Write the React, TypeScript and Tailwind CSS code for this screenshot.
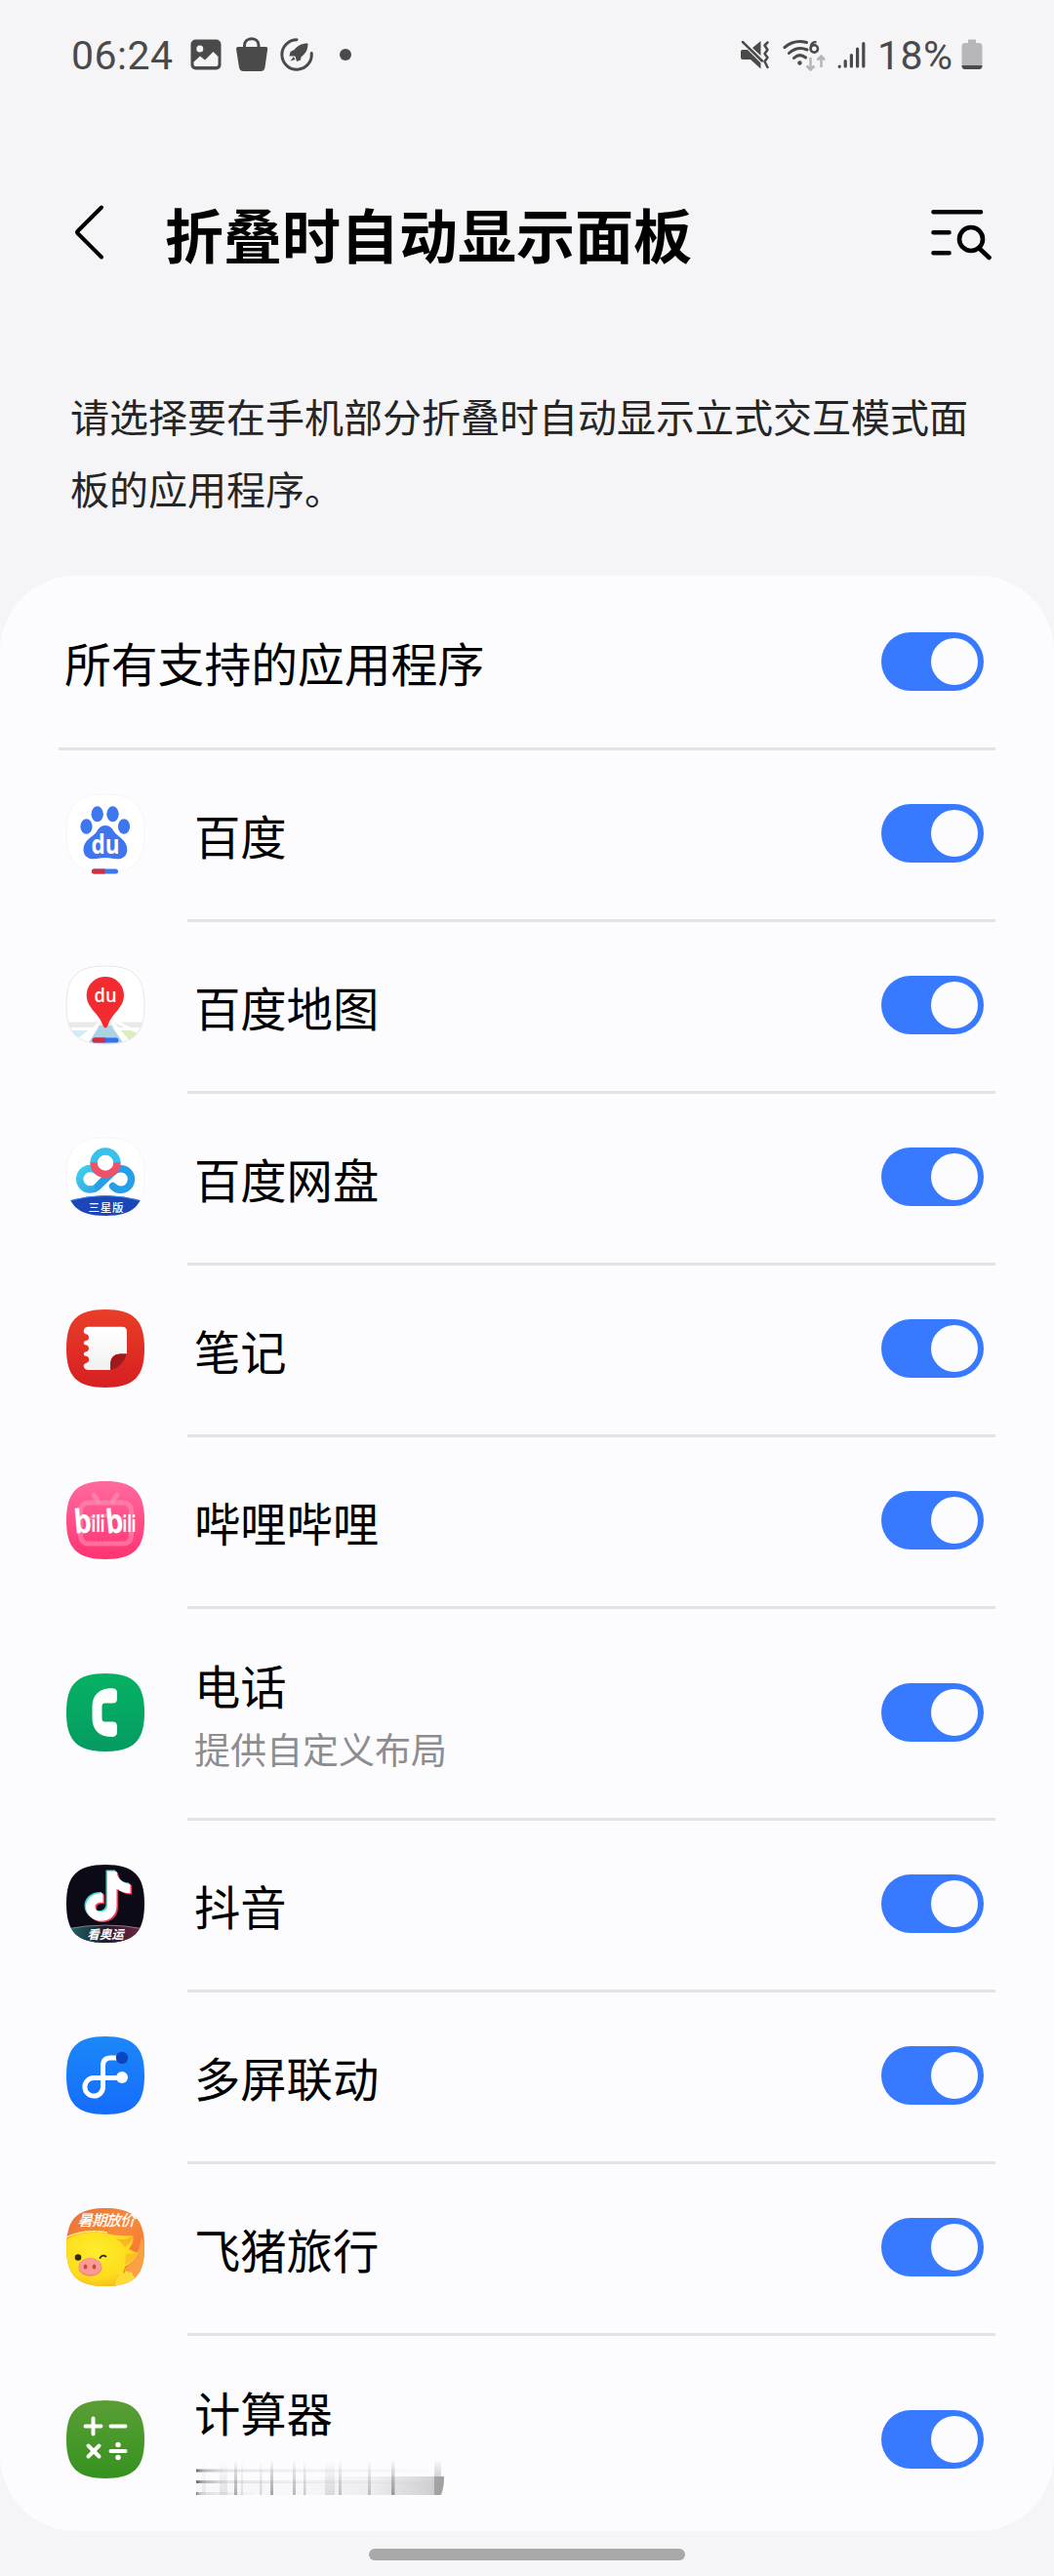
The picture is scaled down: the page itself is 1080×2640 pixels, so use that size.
import type { ReactNode } from "react";

const SQUIRCLE = "M40 0C69 0 80 11 80 40S69 80 40 80 0 69 0 40 11 0 40 0Z";

function AppIcon({ id, children }: { id: string; children: ReactNode }) {
  return (
    <svg viewBox="0 0 80 80" className="size-20 shrink-0 overflow-visible">
      <defs>
        <clipPath id={`${id}-clip`}>
          <path d={SQUIRCLE} />
        </clipPath>
      </defs>
      {children}
    </svg>
  );
}

function BaiduIcon() {
  return (
    <AppIcon id="baidu">
      <path d={SQUIRCLE} fill="#fff" stroke="#f6f6f9" />
      <g fill="#3d76ee">
        <ellipse cx="20.5" cy="33" rx="6.1" ry="7.8" />
        <ellipse cx="31.7" cy="20.3" rx="6.2" ry="8" />
        <ellipse cx="47.5" cy="20.3" rx="6.2" ry="8" />
        <ellipse cx="59" cy="33" rx="6.1" ry="7.8" />
        <path d="M40 32C35 32 33 35 31 38.500C27 44 17.500 47 17.500 56.500C17.500 63 22 66.500 28 66.300C33 66 36 65 40 65S47 66 52 66.300C58 66.500 62.300 63 62.300 56.500C62.300 47 53 44 49 38.500C47 35 45 32 40 32Z" />
      </g>
      <text x="40" y="61" textAnchor="middle" fontSize="26" fontWeight="700" textLength="29" lengthAdjust="spacingAndGlyphs" fill="#fff" fontFamily="Open Sans, sans-serif">du</text>
      <rect x="26" y="76.500" width="27" height="5" rx="2.500" fill="#3d76ee" />
      <path d="M39.500 76.500H28.500a2.500 2.500 0 0 0 0 5H39.500Z" fill="#d32f3f" />
    </AppIcon>
  );
}

function MapIcon() {
  return (
    <AppIcon id="map">
      <g clipPath="url(#map-clip)">
        <rect width="80" height="80" fill="#fff" />
        <path d="M0 57.500H80V63H0Z" fill="#e9e9ea" />
        <path d="M0 66H22L10 76H0Z" fill="#d3ebf4" />
        <path d="M34 61H46L59 80H22Z" fill="#abd3e6" />
        <path d="M53 66H80V80H66Z" fill="#dcecc0" />
        <path d="M34 58 12 80M47 58 66 80M48 56 78 70" stroke="#fff" strokeWidth="3" />
      </g>
      <path d={SQUIRCLE} fill="none" stroke="#e7e7ea" />
      <path d="M40 11C29 11 20.700 19.500 20.700 30C20.700 43 34 49 37.500 61Q40 66 42.500 61C46 49 59 43 59 30C59 19.500 51 11 40 11Z" fill="#f32b30" />
      <text x="40" y="37" textAnchor="middle" fontSize="20" fontWeight="600" textLength="23" lengthAdjust="spacingAndGlyphs" fill="#fff" fontFamily="Open Sans, sans-serif">du</text>
      <rect x="26.500" y="73.500" width="27" height="5" rx="2.500" fill="#3472ec" />
      <path d="M40 73.500H29a2.500 2.500 0 0 0 0 5H40Z" fill="#d92b3c" />
    </AppIcon>
  );
}

function NetdiskIcon() {
  return (
    <AppIcon id="disk">
      <defs>
        <linearGradient id="disk-l" x1="0" y1="0" x2="1" y2="1">
          <stop stopColor="#3fd0e8" />
          <stop offset="1" stopColor="#2f9fe8" />
        </linearGradient>
      </defs>
      <path d={SQUIRCLE} fill="#fff" stroke="#f6f6f9" />
      <g fill="none" strokeWidth="7.400" strokeLinecap="round">
        <path d="M38 43.500 32.500 49.500A10.800 10.800 0 1 1 32 34.500" stroke="url(#disk-l)" />
        <path d="M32.500 49.500 47.500 35.500A10.800 10.800 0 1 1 47.500 49.500" stroke="#259fe8" />
        <path d="M28 26A12 12 0 0 1 52 26" stroke="#38c1ea" strokeLinecap="butt" />
        <path d="M28 25.500A12 12 0 0 0 52 25.500" stroke="#ef5168" strokeLinecap="butt" />
      </g>
      <g clipPath="url(#disk-clip)">
        <path d="M2 65Q40 54 78 65V82H2Z" fill="#1c46b7" />
        <path d="M2 65Q40 54 78 65" fill="none" stroke="#3784df" />
      </g>
      <text x="40.500" y="76" textAnchor="middle" fontSize="11.500" fontWeight="500" textLength="36" fill="#fff" fontFamily="Noto Sans CJK SC, sans-serif">三星版</text>
    </AppIcon>
  );
}

function NotesIcon() {
  return (
    <AppIcon id="notes">
      <defs>
        <linearGradient id="notes-bg" x2="0" y2="1">
          <stop stopColor="#e93e27" />
          <stop offset="1" stopColor="#d61f22" />
        </linearGradient>
        <linearGradient id="notes-page" x2="0" y2="1">
          <stop stopColor="#fff" />
          <stop offset="1" stopColor="#f1f1f2" />
        </linearGradient>
      </defs>
      <path d={SQUIRCLE} fill="url(#notes-bg)" />
      <path
        d="M22 17.700H57Q62 17.700 62 22.700V45.500H55Q45.500 46 45.200 55V62H22Q17.500 61.500 17.700 57Q18.500 55 21.300 54.500A3 3.500 0 0 0 21.300 48Q18 48 17.700 45.500Q18 43.500 21.300 43A3 3.500 0 0 0 21.300 36.700Q18 36.500 17.700 34.300Q18 32 21.300 31.800A3 3.500 0 0 0 21.300 25.500Q18 25 17.700 22.500Q18 18 22 17.700Z"
        fill="url(#notes-page)"
      />
      <path d="M45.200 62V55Q45.500 46 55 45.500H62Q60 52 55.500 56.500T45.200 62Z" fill="#9f1a1c" />
    </AppIcon>
  );
}

function BilibiliIcon() {
  return (
    <AppIcon id="bili">
      <defs>
        <linearGradient id="bili-bg" x2="0" y2="1">
          <stop stopColor="#ff6a9f" />
          <stop offset="1" stopColor="#ff3371" />
        </linearGradient>
      </defs>
      <path d={SQUIRCLE} fill="url(#bili-bg)" />
      <g fill="none" stroke="#ff8fb4" strokeOpacity=".6" strokeWidth="5" strokeLinecap="round">
        <rect x="14.500" y="22" width="52" height="42" rx="8" />
        <path d="M28 14 33 21M52 14 47 21" />
        <path d="M24 38Q40 32 56 38" strokeWidth="4" />
      </g>
      <g fill="#fff" fontFamily="Open Sans, sans-serif" fontWeight="700">
        <text x="7.500" y="53" fontSize="34" textLength="18" lengthAdjust="spacingAndGlyphs" transform="rotate(-5 16 40)">b</text>
        <text x="25.500" y="52" fontSize="24" textLength="14" lengthAdjust="spacingAndGlyphs">ili</text>
        <text x="40" y="53" fontSize="34" textLength="18" lengthAdjust="spacingAndGlyphs" transform="rotate(-5 48 40)">b</text>
        <text x="57.500" y="52" fontSize="24" textLength="14" lengthAdjust="spacingAndGlyphs">ili</text>
      </g>
    </AppIcon>
  );
}

function PhoneIcon() {
  return (
    <AppIcon id="phone">
      <defs>
        <linearGradient id="phone-bg" x2="0" y2="1">
          <stop stopColor="#06b262" />
          <stop offset="1" stopColor="#059b62" />
        </linearGradient>
      </defs>
      <path d={SQUIRCLE} fill="url(#phone-bg)" />
      <path
        d="M46 15.200C34 15.200 26.500 22 26.500 34V46C26.500 58 34 65 46 65C50 65 52 63.500 52 60V54.500Q52 49.500 47.500 49.500H39.500Q36.500 49.500 36.500 46.500V33.500Q36.500 30.500 39.500 30.500H47.500Q52 30.500 52 26V20C52 16.500 50 15.200 46 15.200Z"
        fill="#fff"
      />
    </AppIcon>
  );
}

const NOTE = "M41 6H50.500C51 14 57 18.500 64.500 19V28.500C59 28.500 54 26.500 50.500 24V42C50.500 51 43 57 34.500 57S19 50.500 19 42.500 26 28 36.500 28.500V38C31 37.500 28.500 39.500 28.500 42.500S31 47.500 34.500 47.500 41 45 41 41Z";

function DouyinIcon() {
  return (
    <AppIcon id="douyin">
      <defs>
        <linearGradient id="douyin-band">
          <stop stopColor="#1b6d6c" />
          <stop offset=".5" stopColor="#231c2c" />
          <stop offset="1" stopColor="#7d2349" />
        </linearGradient>
      </defs>
      <g clipPath="url(#douyin-clip)">
        <rect width="80" height="80" fill="#0b0a16" />
        <path d="M0 66Q40 58 80 66V80H0Z" fill="url(#douyin-band)" />
        <path d="M0 66Q40 58 80 66" fill="none" stroke="#9b93a0" strokeWidth=".8" />
      </g>
      <path d={NOTE} fill="#42dccf" transform="translate(-.5 -.5)" />
      <path d={NOTE} fill="#f0385f" transform="translate(2.500 2)" />
      <path d={NOTE} fill="#fff" transform="translate(1 .8)" />
      <text x="40" y="76" textAnchor="middle" fontSize="12.500" fontStyle="italic" fontWeight="700" fill="#fff" fontFamily="Noto Sans CJK SC, sans-serif">看奥运</text>
    </AppIcon>
  );
}

function FlowIcon() {
  return (
    <AppIcon id="flow">
      <defs>
        <linearGradient id="flow-bg" x2="0" y2="1">
          <stop stopColor="#1b88f8" />
          <stop offset="1" stopColor="#156cfb" />
        </linearGradient>
      </defs>
      <path d={SQUIRCLE} fill="url(#flow-bg)" />
      <path d="M56 42.500H28A9.300 9.300 0 1 0 37.500 51.500V30Q37.500 22 45.500 22H52" fill="none" stroke="#fff" strokeWidth="5" />
      <circle cx="57" cy="42" r="6" fill="#fff" />
      <circle cx="57" cy="22" r="6.200" fill="#0a46bf" />
    </AppIcon>
  );
}

function FliggyIcon() {
  return (
    <AppIcon id="pig">
      <defs>
        <linearGradient id="pig-bg" x2="1" y2="1">
          <stop stopColor="#e9713b" />
          <stop offset=".5" stopColor="#f98a3a" />
          <stop offset="1" stopColor="#f0682a" />
        </linearGradient>
        <radialGradient id="pig-face" cx=".4" cy=".35" r=".75">
          <stop stopColor="#ffec2c" />
          <stop offset=".65" stopColor="#fddd1c" />
          <stop offset="1" stopColor="#f5b515" />
        </radialGradient>
      </defs>
      <g clipPath="url(#pig-clip)">
        <rect width="80" height="80" fill="url(#pig-bg)" />
        <path d="M60 62Q74 50 77 30L82 40V80H60Z" fill="#f9a043" />
        <path d="M0 32Q16 22 42 26Q52 29 68 28Q70 34 64 42Q70 45 74 46Q68 56 60 60Q58 72 52 80H0Z" fill="url(#pig-face)" />
        <path d="M50 31Q62 34 68 28Q68 35 60 40Q56 34 50 31Z" fill="#f9a72b" fillOpacity=".75" />
        <path d="M61 47Q68 47 73 46Q68 54 60 58Z" fill="#fbb22b" fillOpacity=".7" />
        <path d="M0 30Q18 21 42 25" stroke="#fff06b" strokeWidth="1.500" fill="none" />
        <path d="M50 80Q50 72 55 69Q50 65 53 63Q57 64 59 67Q61 62 64 66Q68 64 68 69Q72 70 68 75Q64 80 60 80Z" fill="#ffdb35" />
        <ellipse cx="24.500" cy="60.500" rx="12" ry="9.500" fill="#f5887f" />
        <ellipse cx="24.500" cy="59.800" rx="11.300" ry="8.300" fill="#fb9b92" />
        <ellipse cx="19.500" cy="60" rx="1.900" ry="2.600" fill="#c9494b" />
        <ellipse cx="28.500" cy="60" rx="1.900" ry="2.600" fill="#c9494b" />
        <circle cx="12" cy="50.500" r="3.300" fill="#33290f" />
        <path d="M34.500 51Q37 47 40.500 49.500" fill="none" stroke="#33290f" strokeWidth="1.800" strokeLinecap="round" />
      </g>
      <text x="41" y="18" textAnchor="middle" fontSize="15.500" fontStyle="italic" fontWeight="500" textLength="59" fill="#fff" fontFamily="Noto Sans CJK SC, sans-serif">暑期放价</text>
    </AppIcon>
  );
}

function CalculatorIcon() {
  return (
    <AppIcon id="calc">
      <defs>
        <linearGradient id="calc-bg" x2="0" y2="1">
          <stop stopColor="#5a9e35" />
          <stop offset="1" stopColor="#35921f" />
        </linearGradient>
      </defs>
      <path d={SQUIRCLE} fill="url(#calc-bg)" />
      <g stroke="#fff" strokeWidth="4" strokeLinecap="round">
        <path d="M19.500 26.500H35.500M27.500 18.500V34.500M45.500 26.500H60.500M22.500 46.500 33.500 57.500M33.500 46.500 22.500 57.500M45.500 52H60.500" />
      </g>
      <circle cx="53" cy="45.500" r="2.700" fill="#fff" />
      <circle cx="53" cy="58.500" r="2.700" fill="#fff" />
    </AppIcon>
  );
}

function Toggle() {
  return (
    <button role="switch" aria-checked="true" className="flex h-[60px] w-[105px] shrink-0 items-center justify-end rounded-full bg-[#387aff] pr-1.5">
      <span className="size-12 rounded-full bg-[#fcfcff]" />
    </button>
  );
}

/** Vertical streaks of the half-revealed caption: [x, width, opacity]. */
const STREAKS = [
  [8, 4, 0.12], [26, 8, 0.16], [41, 3, 0.6], [48, 2, 0.2], [67, 2.5, 0.25], [78, 3, 0.65],
  [101, 3, 0.5], [112, 2.5, 0.35], [134, 10, 0.2], [148, 3, 0.4], [178, 3, 0.4], [202, 3.5, 0.7],
];

function RevealingCaption() {
  return (
    <svg viewBox="0 0 256 40" className="mt-1.5 h-10 w-64">
      <defs>
        <linearGradient id="cap-v" x2="0" y2="1">
          <stop stopColor="#777" stopOpacity="0" />
          <stop offset=".5" stopColor="#777" stopOpacity=".55" />
          <stop offset="1" stopColor="#777" />
        </linearGradient>
        <linearGradient id="cap-r">
          <stop stopColor="#777" stopOpacity="0" />
          <stop offset=".5" stopColor="#777" stopOpacity=".08" />
          <stop offset=".9" stopColor="#777" stopOpacity=".3" />
          <stop offset="1" stopColor="#777" stopOpacity=".45" />
        </linearGradient>
        <linearGradient id="cap-l">
          <stop stopColor="#555" stopOpacity=".9" />
          <stop offset=".03" stopColor="#777" stopOpacity=".55" />
          <stop offset=".12" stopColor="#777" stopOpacity=".18" />
          <stop offset=".4" stopColor="#777" stopOpacity=".1" />
          <stop offset="1" stopColor="#777" stopOpacity=".02" />
        </linearGradient>
      </defs>
      <rect x="2" y="10.500" width="240" height="3" fill="url(#cap-l)" />
      <rect x="2" y="22" width="240" height="3" fill="url(#cap-l)" />
      <rect x="2" y="34" width="60" height="3" fill="url(#cap-l)" />
      <rect x="2" y="24" width="252" height="13" fill="#777" fillOpacity=".04" />
      <path d="M110 18H256Q256 30 252 37H110Z" fill="url(#cap-r)" />
      {STREAKS.map(([x, w, o]) => (
        <rect key={x} x={x} y="1" width={w} height="36" fill="url(#cap-v)" opacity={o} />
      ))}
      <rect x="246" y="1" width="7" height="17" fill="url(#cap-v)" opacity=".3" />
      <path d="M246 18H256Q256 30 253 37H246Z" fill="#8b8b8b" fillOpacity=".6" />
    </svg>
  );
}

type Row = { icon: ReactNode; name: string; caption?: ReactNode };

const ROWS: Row[] = [
  { icon: <BaiduIcon />, name: "百度" },
  { icon: <MapIcon />, name: "百度地图" },
  { icon: <NetdiskIcon />, name: "百度网盘" },
  { icon: <NotesIcon />, name: "笔记" },
  { icon: <BilibiliIcon />, name: "哔哩哔哩" },
  { icon: <PhoneIcon />, name: "电话", caption: "提供自定义布局" },
  { icon: <DouyinIcon />, name: "抖音" },
  { icon: <FlowIcon />, name: "多屏联动" },
  { icon: <FliggyIcon />, name: "飞猪旅行" },
  { icon: <CalculatorIcon />, name: "计算器", caption: <RevealingCaption /> },
];

function AppRow({ icon, name, caption }: Row) {
  return (
    <li className={caption ? "flex h-[217px] shrink-0 px-[60px]" : "flex h-[176px] shrink-0 px-[60px]"}>
      <div className="flex w-[132px] shrink-0 items-center pl-2">{icon}</div>
      <div className="flex grow items-center justify-between border-t-3 border-[#e3e3e6] pr-3 pb-[3px] pl-[7px]">
        <div className="flex flex-col pt-[3px]">
          <span className="text-[47.3px] leading-[68px]">{name}</span>
          {caption && <span className="flex h-[58px] items-center pt-1 text-[37px] leading-[58px] text-[#8d8d8f]">{caption}</span>}
        </div>
        <Toggle />
      </div>
    </li>
  );
}

function StatusBar() {
  return (
    <header className="flex h-28 items-center justify-between pr-[73px] pl-[73px] font-[Roboto,sans-serif] text-[40px] leading-none text-[#4a4a4b]">
      <div className="flex items-center">
        <span className="w-[122px] pt-0.5 text-[41px] tracking-[0.5px]">06:24</span>
        <svg viewBox="0 0 32 32" className="size-8">
          <rect x=".5" y=".5" width="31" height="31" rx="5" fill="currentColor" />
          <circle cx="9.800" cy="10" r="3.500" fill="#f5f5f8" />
          <path d="M3.500 23.500 10 17.500 15 21.500 23.500 13 28.500 18V26Q28.500 28 26.500 28H5.500Q3.500 28 3.500 26Z" fill="#f5f5f8" />
        </svg>
        <svg viewBox="0 0 34 36" className="ml-3.5 h-9 w-[34px]">
          <path d="M9.500 11V8.500C9.500 -.500 24 -.500 24 8.500V11" fill="none" stroke="currentColor" strokeWidth="3" />
          <path d="M3 10H31.500Q33.500 10 33.200 12L30.500 31Q29.800 35 26 35H8.500Q4.700 35 4 31L1 12Q1 10 3 10Z" fill="currentColor" />
        </svg>
        <svg viewBox="0 0 34 34" className="ml-3 size-[34px]">
          <path d="M17 1.800A15.200 15.200 0 1 0 32.200 15.500" fill="none" stroke="currentColor" strokeWidth="3" strokeLinecap="round" />
          <path d="M28.500 5.500C21 5.500 18 8 14.500 12L10.500 14 9.500 18.500 15.500 18.500 17 24 21 22.500 21.500 19.500C26.500 15.500 28.500 12 28.500 5.500ZM14 19 10.500 23.500 15.500 22Z" fill="currentColor" />
        </svg>
        <span className="ml-[27px] size-3 rounded-full bg-[#4a4a4b]" />
      </div>
      <div className="flex items-center">
        <svg viewBox="0 0 32 32" className="size-8">
          <path d="M1 12.500Q1 11 3 11H8L21.500 24.500V30.500L11 21H3Q1 21 1 19ZM13 9 21.500 2V17Z" fill="currentColor" />
          <path d="M3 3 23 22.500" stroke="currentColor" strokeWidth="2.500" strokeLinecap="round" />
          <path d="M28.500 3.500 25.500 6.500 28.500 11 25.500 15 28.500 19 25.500 23 28.500 29" fill="none" stroke="currentColor" strokeWidth="2.500" strokeLinecap="round" strokeLinejoin="round" />
        </svg>
        <svg viewBox="0 0 44 34" className="ml-3 h-[34px] w-11">
          <g fill="none" stroke="currentColor" strokeWidth="3" strokeLinecap="round">
            <path d="M2 9.500Q12 1 24.500 4.500M6.500 15.500Q15 8 25 12M11.500 20.500Q17.500 15 23.500 20" />
          </g>
          <circle cx="17.500" cy="25.500" r="2.200" fill="currentColor" />
          <path d="M34.500 4Q28.500 4 28.800 10.500" fill="none" stroke="currentColor" strokeWidth="2.500" />
          <circle cx="32.300" cy="11" r="3.700" fill="none" stroke="currentColor" strokeWidth="2.500" />
          <path d="M28.500 20V32M24.500 28.500 28.500 32.500 32.500 28.500M39.500 30V18.500M35.500 22.500 39.500 18.500 43 22.500" fill="none" stroke="#b5b5b6" strokeWidth="2.500" />
        </svg>
        <svg viewBox="0 0 30 30" className="ml-3 size-[30px]">
          <path d="M2.200 27.200V27.300M8.200 21.500V27M14.400 15.500V27M20.600 9V27M26.800 3.500V27" stroke="currentColor" strokeWidth="3.200" strokeLinecap="round" />
        </svg>
        <span className="ml-[11px] w-[86px] pt-0.5 text-[41px] tracking-[0.5px]">18%</span>
        <svg viewBox="0 0 22 32" className="h-8 w-[22px]">
          <path d="M7 .5H15V4H18Q21.500 4 21.500 8V27Q21.500 31 18 31H4Q.5 31 .5 27V8Q.5 4 4 4H7Z" fill="#b7b7b9" />
          <path d="M.5 27H21.500Q21.500 31 18 31H4Q.5 31 .5 27Z" fill="currentColor" />
        </svg>
      </div>
    </header>
  );
}

export default function App() {
  return (
    <div className="flex h-[2640px] w-[1080px] flex-col overflow-hidden bg-[#f5f5f8] font-['Noto_Sans_CJK_SC',sans-serif] text-black">
      <StatusBar />

      <div className="flex h-64 items-center pr-[64px] pl-[74px]">
        <svg viewBox="0 0 34 60" className="-mt-1 h-[60px] w-[34px]" fill="none" stroke="currentColor" strokeWidth="4" strokeLinecap="round" strokeLinejoin="round">
          <path d="M30 4.500 5.500 29Q4.500 30 5.500 31L30 55.500" />
        </svg>
        <h1 className="-mt-[3px] ml-[61px] text-[60px] leading-[87px] font-bold">折叠时自动显示面板</h1>
        <svg viewBox="0 0 64 54" className="-mt-px ml-auto h-[54px] w-16" fill="none" stroke="currentColor" strokeWidth="4.600" strokeLinecap="round">
          <path d="M4.500 4.300H53M4.500 25.300H20.500M4.500 46.300H20.500M51.500 41.500 61.500 51" />
          <circle cx="43" cy="32" r="12" />
        </svg>
      </div>

      <p className="h-[222px] px-[72px] pt-[21px] text-[40px] leading-[74px] whitespace-nowrap text-[#252526]">
        请选择要在手机部分折叠时自动显示立式交互模式面
        <br />
        板的应用程序。
      </p>

      <main className="flex h-[2004px] shrink-0 flex-col overflow-hidden rounded-[78px] bg-[#fcfcff]">
        <div className="flex h-[176px] shrink-0 items-center justify-between pr-[72px] pl-[66px]">
          <span className="pt-px text-[47.8px] leading-[70px]">所有支持的应用程序</span>
          <Toggle />
        </div>
        <div className="relative flex flex-col">
          <div className="absolute top-0 left-[60px] h-[3px] w-[132px] bg-[#e3e3e6]" />
          <ul className="flex flex-col">
            {ROWS.map((row) => (
              <AppRow key={row.name} {...row} />
            ))}
          </ul>
        </div>
      </main>

      <div className="mx-auto mt-[17.5px] h-3 w-[324px] shrink-0 rounded-full bg-[#a9a9aa]" />
    </div>
  );
}
